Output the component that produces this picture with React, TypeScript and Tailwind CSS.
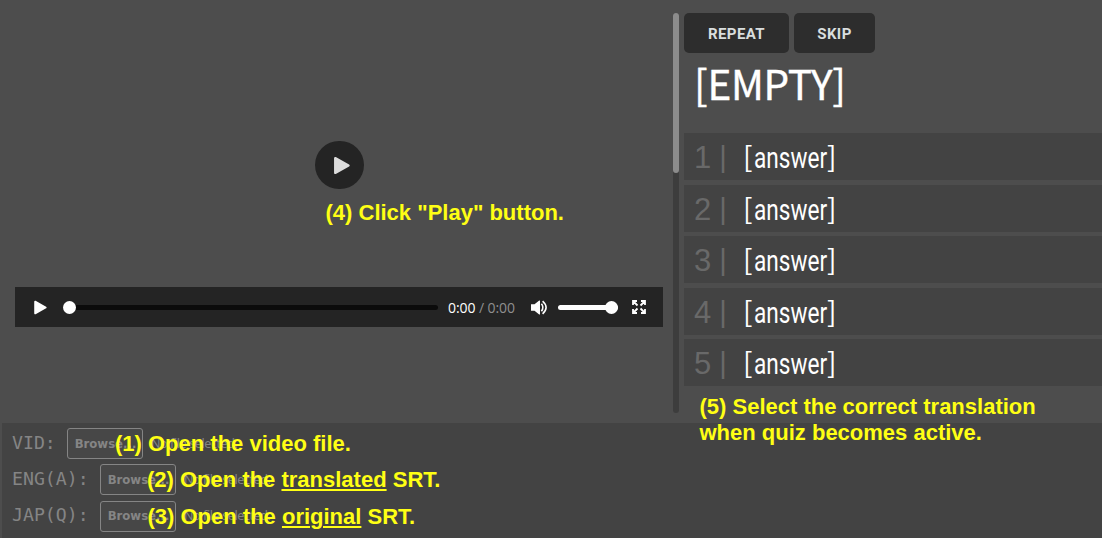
import React from "react";

const answers = [1, 2, 3, 4, 5];
const files = [
  { label: "VID:", pad: "w-[55px]" },
  { label: "ENG(A):", pad: "w-[88px]" },
  { label: "JAP(Q):", pad: "w-[88px]" },
];

function Note({ className, children }: { className: string; children: React.ReactNode }) {
  return (
    <div
      className={`absolute whitespace-nowrap font-['Liberation_Sans',sans-serif] text-[22px] leading-[26px] font-bold text-[#ffff14] ${className}`}
    >
      {children}
    </div>
  );
}

function PlayIcon({ className }: { className: string }) {
  return (
    <svg viewBox="0 0 14 16" className={className} fill="currentColor" stroke="currentColor" strokeWidth="2" strokeLinejoin="round">
      <path d="M1.3 1.8 L12.5 8 L1.3 14.2 Z" />
    </svg>
  );
}

function Controls() {
  return (
    <div className="ml-[15px] flex h-[40px] w-[648px] items-center bg-[#242424] text-white">
      <PlayIcon className="ml-[18px] h-[15px] w-[15px]" />
      <div className="relative ml-[16px] h-[5px] w-[374px] rounded-full bg-[#0b0b0b]">
        <div className="absolute -top-[4px] -left-[1px] size-[13px] rounded-full bg-white" />
      </div>
      <div className="ml-[10px] w-[68px] pt-[1px] font-['Open_Sans',sans-serif] text-[14px] leading-[20px] tracking-[-0.08px] whitespace-nowrap">
        0:00 <span className="text-[#8f8f8f]">/ 0:00</span>
      </div>
      <svg viewBox="0 0 17 15" className="ml-[15px] h-[15px] w-[17px]" fill="none" stroke="white" strokeWidth="1.6">
        <path d="M0 4.2h3.5L8.2 .6q.8-.4.8.5v12.8q0 .9-.8.5L3.5 10.800H0z" fill="white" stroke="none" />
        <path d="M10.400 3.800q3 3.700 0 7.400M11.600 1.200q7 6.300 0 12.600" />
      </svg>
      <div className="relative ml-[10px] h-[5px] w-[60px] rounded-full bg-white">
        <div className="absolute -top-[4px] right-0 size-[13px] rounded-full bg-white" />
      </div>
      <svg viewBox="0 0 14 14" className="ml-[14px] size-[14px]" fill="none" stroke="white" strokeWidth="1.8">
        <path d="M1 5V1h4M9 1h4v4M13 9v4H9M5 13H1V9M1 1l4.500 4.500M13 1 8.500 5.500M13 13 8.500 8.500M1 13l4.500-4.500" />
      </svg>
    </div>
  );
}

export default function App() {
  return (
    <div className="relative flex h-[538px] w-[1102px] flex-col overflow-hidden bg-[#4d4d4d]">
      <div className="flex h-[423px]">
        <div className="flex w-[673px] flex-col">
          <div className="flex h-[287px] pt-[141px] pl-[315px]">
            <div className="flex h-[48px] w-[49px] items-center justify-center rounded-full bg-[#242424] pl-[5px] text-[#dcdcdc]">
              <PlayIcon className="h-[19px] w-[18px]" />
            </div>
          </div>
          <Controls />
        </div>
        <div className="mt-[13px] h-[400px] w-[6px] rounded-full bg-[#3d3d3d]">
          <div className="h-[160px] rounded-full bg-[#8c8c8c]" />
        </div>
        <div className="ml-[5px] flex flex-1 flex-col pt-[13px]">
          <div className="flex gap-[5px] font-['Roboto',sans-serif] text-[15px] font-bold tracking-[0.4px] text-[#d9dede]">
            <button className="h-[40px] w-[105px] rounded-[5px] bg-[#2d2d2d] pt-[2px]">REPEAT</button>
            <button className="h-[40px] w-[81px] rounded-[5px] bg-[#2d2d2d] pt-[2px]">SKIP</button>
          </div>
          <div className="h-[80px] pl-[10px] font-['Noto_Sans_CJK_JP',sans-serif] text-[40.500px] leading-[59px] tracking-[-0.3px] text-white [-webkit-text-stroke:0.4px_white]">
            [EMPTY]
          </div>
          <div className="flex flex-col gap-[4.500px]">
            {answers.map((n) => (
              <div key={n} className="flex h-[47px] items-center bg-[#434343]">
                <span className="flex w-[59px] gap-[8px] pt-[2px] pl-[10px] font-['Liberation_Sans',sans-serif] text-[31px] leading-[47px] text-[#696969]">
                  <span>{n}</span>
                  <span className="text-[29px]">|</span>
                </span>
                <span className="w-[11px] pb-[2px] font-['Noto_Sans_CJK_JP',sans-serif] text-[28px] leading-[47px] text-white">[</span>
                <span className="w-[73px] pt-[4px] font-['Roboto',sans-serif] text-[29px] leading-[47px] text-white">
                  <span className="inline-block origin-left scale-x-[0.78]">answer</span>
                </span>
                <span className="pb-[2px] font-['Noto_Sans_CJK_JP',sans-serif] text-[28px] leading-[47px] text-white">]</span>
              </div>
            ))}
          </div>
        </div>
      </div>
      <div className="ml-[2px] flex flex-1 flex-col gap-[5px] bg-[#434343] pt-[5px] pl-[10px]">
        {files.map((f) => (
          <div key={f.label} className="flex h-[31.300px] items-center text-[#858585]">
            <span className={`${f.pad} pb-[2px] font-['DejaVu_Sans_Mono',monospace] text-[18.200px] leading-[28px]`}>{f.label}</span>
            <button className="h-[31px] w-[76px] rounded-[3px] border border-[#858585] bg-[#474747] pt-[2px] pl-[1px] font-['DejaVu_Sans',sans-serif] text-[11.700px] font-bold">
              Browse...
            </button>
            <span className="ml-[8px] pt-[1px] font-['Noto_Sans',sans-serif] text-[12.500px] tracking-[-0.4px]">No file selected.</span>
          </div>
        ))}
      </div>
      <Note className="top-[200px] left-[325.500px]">(4) Click "Play" button.</Note>
      <Note className="top-[394px] left-[699.500px]">
        (5) Select the correct translation
        <br />
        when quiz becomes active.
      </Note>
      <Note className="top-[431px] left-[115px]">(1) Open the video file.</Note>
      <Note className="top-[467px] left-[147px]">
        (2) Open the <u>translated</u> SRT.
      </Note>
      <Note className="top-[504px] left-[147.500px]">
        (3) Open the <u>original</u> SRT.
      </Note>
    </div>
  );
}
